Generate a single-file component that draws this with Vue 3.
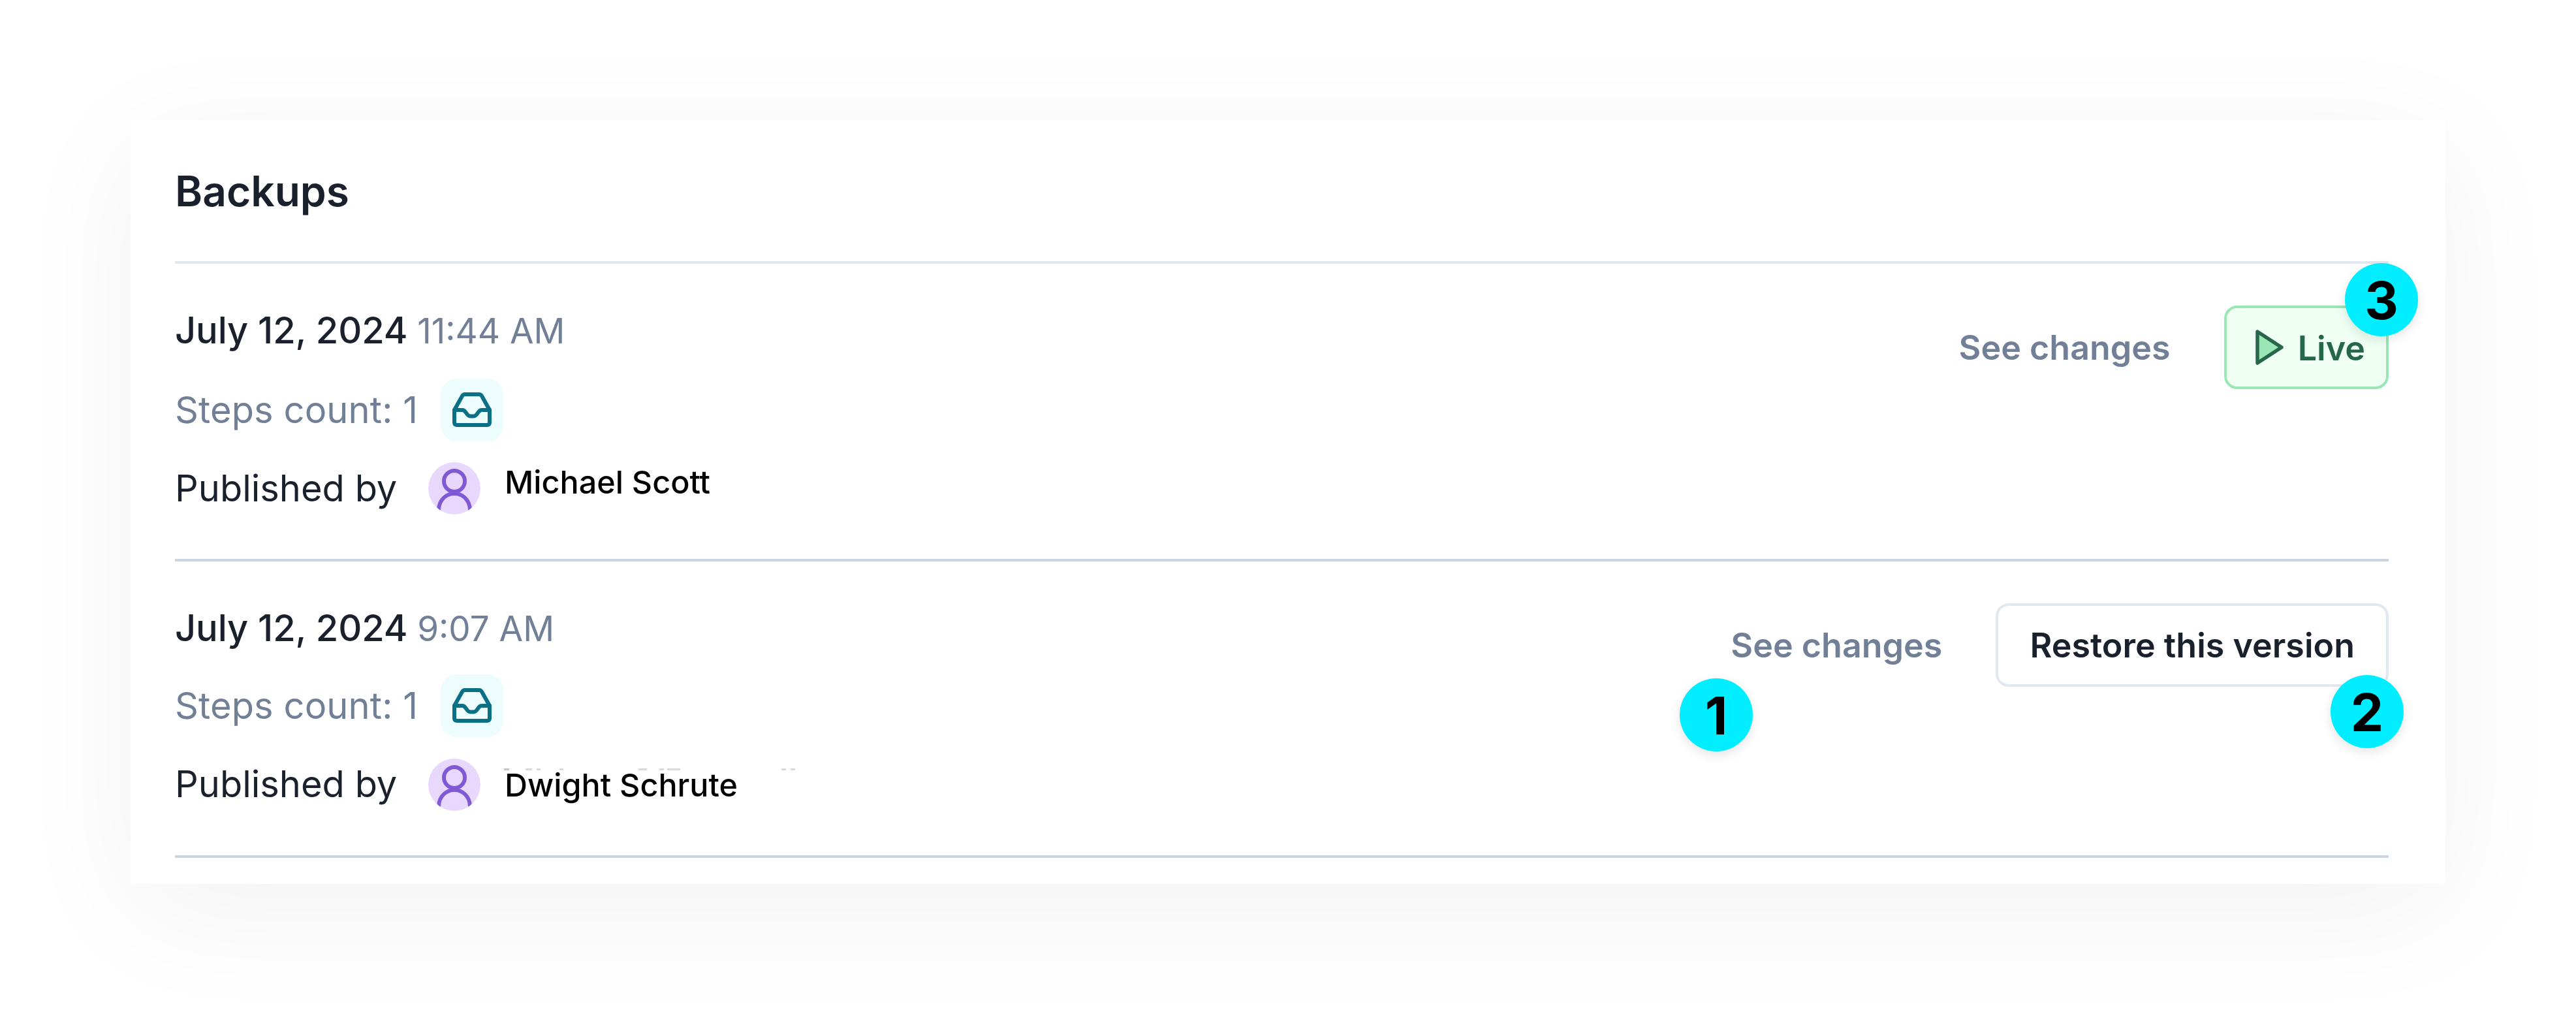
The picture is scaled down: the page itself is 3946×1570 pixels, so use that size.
<template>
  <div class="page">
    <section class="card">
      <h1 class="title">Backups</h1>

      <div v-for="(b, i) in backups" :key="i" class="row" :class="{ 'row-last': i === backups.length - 1 }">
        <div class="info">
          <div class="date">{{ b.date }} <span class="time">{{ b.time }}</span></div>
          <div class="steps">
            <span class="steps-label">Steps count: {{ b.steps }}</span>
            <span class="chip">
              <svg width="64" height="56" viewBox="0 0 64 56" fill="none" stroke="#0b7085" stroke-width="6" stroke-linejoin="round" stroke-linecap="round">
                <path d="M5 28 L17 6.5 Q18.5 4 21 4 H43 Q45.5 4 47 6.5 L59 28 V47 Q59 51 55 51 H9 Q5 51 5 47 Z" />
                <path d="M5 28 H17 Q20 28 22 31 L25 35 Q27 37.500 30 37.500 H34 Q37 37.500 39 35 L42 31 Q44 28 47 28 H59" />
              </svg>
            </span>
          </div>
          <div class="published">
            <span class="published-label">Published by</span>
            <span class="avatar">
              <svg width="80" height="80" viewBox="0 0 80 80" fill="none" stroke="#805ad5" stroke-width="6" stroke-linecap="round">
                <circle cx="40" cy="29" r="16" />
                <path d="M16 72 C17 58 27 48 40 48 C53 48 63 58 64 72" />
              </svg>
            </span>
            <span class="name" :class="{ 'name-low': i === 1 }">{{ b.author }}</span>
          </div>
        </div>
        <div class="actions">
          <a class="link">See changes</a>
          <button v-if="b.live" class="btn btn-live">
            <svg width="44" height="56" viewBox="0 0 44 56" fill="#9ae6b4" stroke="#276749" stroke-width="5.5" stroke-linejoin="round">
              <path d="M3 4 L40 28 L3 52 Z" />
            </svg>
            <span class="live-text">Live</span>
          </button>
          <button v-else class="btn">Restore this version</button>
        </div>
      </div>

      <span class="residue"></span>
      <span class="marker marker-1">1</span>
      <span class="marker marker-2">2</span>
      <span class="marker marker-3">3</span>
    </section>
  </div>
</template>

<script setup>
const backups = [
  { date: 'July 12, 2024', time: '11:44 AM', steps: 1, author: 'Michael Scott', live: true },
  { date: 'July 12, 2024', time: '9:07 AM', steps: 1, author: 'Dwight Schrute', live: false }
]
</script>

<style>
html, body {
  background: #fff;
}
</style>

<style scoped>
.page {
  width: 3946px;
  height: 1570px;
  padding: 184px 0 0 200px;
  box-sizing: border-box;
  overflow: hidden;
  font-family: Inter, "Liberation Sans", sans-serif;
}
.card {
  position: relative;
  width: 3546px;
  height: 1170px;
  box-sizing: border-box;
  padding: 64px 87px 0 68px;
  background: #fff;
  box-shadow: 0 40px 180px rgba(0, 0, 0, 0.055);
}
.title {
  margin: 0;
  padding-bottom: 62px;
  border-bottom: 4px solid #e2e8f0;
  font-size: 64px;
  line-height: 90px;
  font-weight: 600;
  color: #1a202c;
}
.row {
  display: flex;
  justify-content: space-between;
  align-items: flex-start;
  padding: 64px 0 68px;
  border-bottom: 4px solid #cbd5e0;
}
.info {
  display: flex;
  flex-direction: column;
  font-size: 56px;
  color: #1a202c;
}
.date {
  height: 76px;
  line-height: 76px;
  font-weight: 500;
  letter-spacing: -0.1px;
}
.time {
  font-weight: 400;
  font-size: 53px;
  letter-spacing: 0;
  color: #718096;
}
.steps {
  display: flex;
  align-items: center;
  gap: 35px;
  margin-top: 36px;
}
.row-last .steps {
  margin-top: 33px;
}
.steps-label {
  color: #718096;
  letter-spacing: 0.1px;
}
.chip {
  width: 96px;
  height: 96px;
  border-radius: 24px;
  background: #edfdfd;
  display: flex;
  align-items: center;
  justify-content: center;
}
.published {
  display: flex;
  align-items: center;
  margin-top: 32px;
}
.row-last .published {
  margin-top: 33px;
}
.row-last .published-label {
  padding-bottom: 3px;
}
.published-label {
  width: 388px;
}
.avatar {
  width: 80px;
  height: 80px;
  border-radius: 50%;
  background: #e9d8fd;
  overflow: hidden;
}
.avatar svg {
  display: block;
}
.name {
  margin-left: 37px;
  font-size: 48.500px;
  font-weight: 450;
  color: #000;
  transform: translateY(-10px);
}
.name-low {
  transform: none;
}
.actions {
  display: flex;
  align-items: center;
  gap: 82px;
}
.link {
  font-size: 52px;
  font-weight: 600;
  color: #718096;
}
.btn {
  height: 128px;
  box-sizing: border-box;
  padding: 0 48px;
  display: flex;
  align-items: center;
  background: #fff;
  border: 4px solid #e2e8f0;
  border-radius: 20px;
  font-family: inherit;
  font-size: 52px;
  font-weight: 600;
  color: #1a202c;
}
.btn-live {
  padding: 0 32px 0 44px;
  gap: 21px;
  background: #f0fff4;
  border-color: #9ae6b4;
  color: #276749;
}
.live-text {
  padding-top: 3px;
}
/* leftovers of the masked line above the second name */
.residue {
  position: absolute;
  left: 572px;
  top: 993px;
  width: 450px;
  height: 3px;
  background: linear-gradient(90deg,
    #c4c6ca 0 8px, transparent 8px 33px, #d8d9dc 33px 43px, transparent 43px 50px,
    #d8d9dc 50px 56px, transparent 56px 85px, #d8d9dc 85px 91px, transparent 91px 206px,
    #d8d9dc 206px 219px, transparent 219px 238px, #d8d9dc 238px 245px, transparent 245px 250px,
    #d8d9dc 250px 270px, transparent 270px 425px, #d8d9dc 425px 432px, transparent 432px 439px,
    #d8d9dc 439px 446px, transparent 446px);
}
.marker {
  position: absolute;
  width: 112px;
  height: 112px;
  border-radius: 50%;
  background: #00eeff;
  box-shadow: 0 6px 16px rgba(0, 0, 0, 0.1);
  display: flex;
  align-items: center;
  justify-content: center;
  font-size: 80px;
  font-weight: 700;
  color: #000;
}
.marker-1 { left: 2373px; top: 855px; }
.marker-2 { left: 3370px; top: 850px; }
.marker-3 { left: 3392px; top: 219px; }
</style>
